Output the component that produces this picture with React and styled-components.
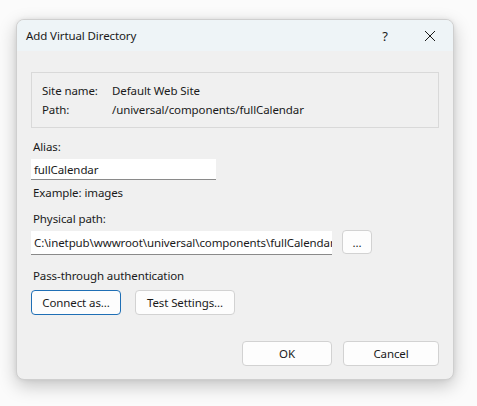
import React from 'react';
import styled, { createGlobalStyle } from 'styled-components';

const GlobalStyle = createGlobalStyle`
  html, body {
    margin: 0;
    padding: 0;
    background: #fbfbfb;
  }
  body {
    font-family: "Noto Sans", "Open Sans", sans-serif;
    font-size: 11.5px;
    letter-spacing: -0.1px;
    color: #1a1a1a;
  }
`;

const Page = styled.div`
  padding: 19px 0 0 16px;
  height: 406px;
  box-sizing: border-box;
`;

const Window = styled.div`
  width: 438px;
  height: 361px;
  box-sizing: border-box;
  display: flex;
  flex-direction: column;
  border: 1px solid #cfcfcf;
  border-radius: 8px;
  overflow: hidden;
  background: #f0f0f0;
  box-shadow: 0 6px 18px rgba(0, 0, 0, 0.22), 0 0 4px rgba(0, 0, 0, 0.08);
`;

const TitleBar = styled.div`
  height: 31px;
  flex: none;
  display: flex;
  align-items: center;
  background: #eef4f7;
  padding-left: 9px;
`;

const Title = styled.div`
  flex: 1;
  color: #1a1a1a;
`;

const CaptionButton = styled.div`
  width: ${p => p.$w}px;
  height: 31px;
  display: flex;
  align-items: center;
  justify-content: center;
  font-size: 13px;
  color: #1a1a1a;
`;

const Body = styled.div`
  flex: 1;
  padding: 21px 14px 0 14px;
  display: flex;
  flex-direction: column;
`;

const InfoBox = styled.div`
  border: 1px solid #d9d9d9;
  height: 56px;
  box-sizing: border-box;
  padding: 8px 10px;
  display: grid;
  grid-template-columns: 70px 1fr;
  row-gap: 2px;
  align-content: center;
  line-height: 17px;
`;

const Label = styled.div`
  margin-top: ${p => p.$top || 0}px;
  margin-left: 2px;
  line-height: 16px;
`;

const TextBox = styled.div`
  width: ${p => p.$w}px;
  height: ${p => p.$h}px;
  box-sizing: border-box;
  background: #ffffff;
  border-bottom: 1px solid #8a8a8a;
  padding: 0 3px;
  display: flex;
  align-items: center;
  white-space: nowrap;
  overflow: hidden;
  margin-top: ${p => p.$top || 0}px;
`;

const Row = styled.div`
  display: flex;
  align-items: ${p => p.$align || 'center'};
  gap: ${p => p.$gap || 10}px;
  margin-top: ${p => p.$top || 0}px;
  justify-content: ${p => p.$justify || 'flex-start'};
`;

const Button = styled.button`
  width: ${p => p.$w}px;
  height: ${p => p.$h || 25}px;
  box-sizing: border-box;
  background: #fdfdfd;
  border: 1px solid ${p => (p.$focus ? '#1f6fb5' : '#d2d2d2')};
  border-radius: 4px;
  font-family: "Noto Sans", "Open Sans", sans-serif;
  font-size: 11.5px;
  letter-spacing: -0.1px;
  color: #1a1a1a;
  padding: 0;
  display: flex;
  align-items: center;
  justify-content: center;
`;

export default function App() {
  return (
    <>
      <GlobalStyle />
      <Page>
        <Window>
          <TitleBar>
            <Title>Add Virtual Directory</Title>
            <CaptionButton $w={44}>?</CaptionButton>
            <CaptionButton $w={46}>
              <svg width="12" height="12" viewBox="0 0 12 12">
                <path d="M1 1L11 11M11 1L1 11" stroke="#1a1a1a" strokeWidth="1" fill="none" />
              </svg>
            </CaptionButton>
          </TitleBar>
          <Body>
            <InfoBox>
              <span>Site name:</span>
              <span>Default Web Site</span>
              <span>Path:</span>
              <span>/universal/components/fullCalendar</span>
            </InfoBox>
            <Label $top={11}>Alias:</Label>
            <TextBox $w={185} $h={21} $top={4}>fullCalendar</TextBox>
            <Label $top={5}>Example: images</Label>
            <Label $top={10}>Physical path:</Label>
            <Row $top={3} $gap={10} $align="flex-start">
              <TextBox $w={301} $h={24} $top={1}>
                C:\inetpub\wwwroot\universal\components\fullCalendar
              </TextBox>
              <Button $w={30} $h={24}>...</Button>
            </Row>
            <Label $top={13}>Pass-through authentication</Label>
            <Row $top={6} $gap={14}>
              <Button $w={90} $focus>Connect as...</Button>
              <Button $w={100}>Test Settings...</Button>
            </Row>
            <Row $top={26} $gap={11} $justify="flex-end">
              <Button $w={90}>OK</Button>
              <Button $w={96}>Cancel</Button>
            </Row>
          </Body>
        </Window>
      </Page>
    </>
  );
}
